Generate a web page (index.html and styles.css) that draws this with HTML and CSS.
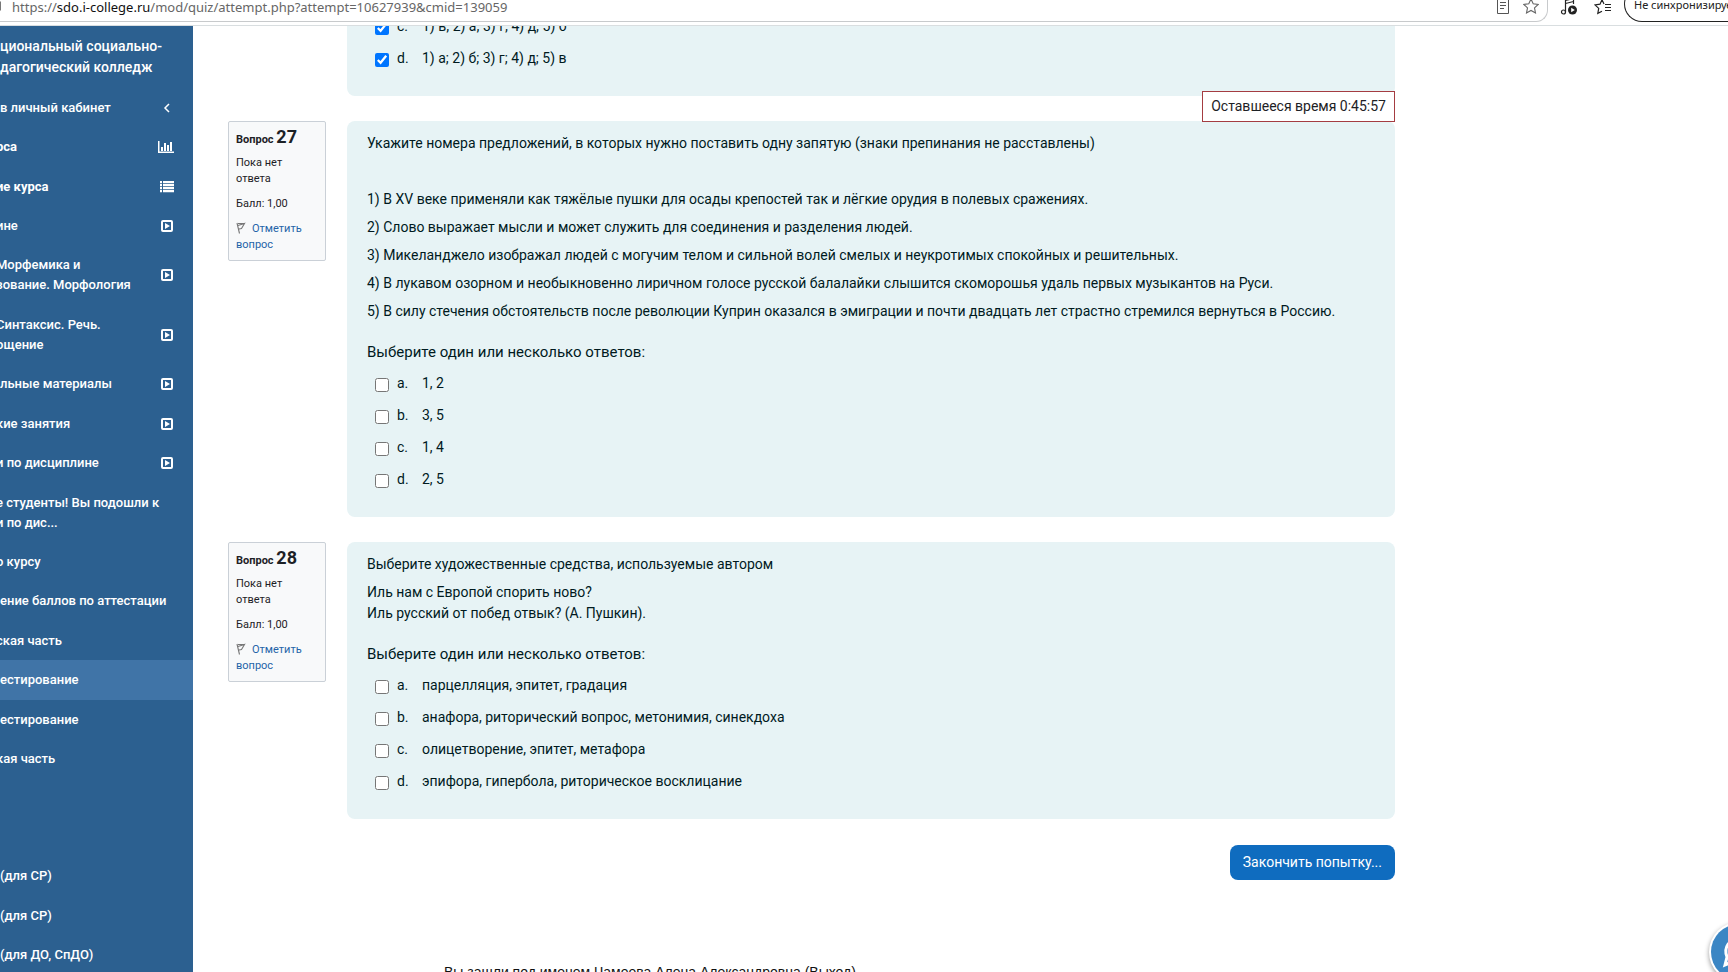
FILE: index.html
```html
<!DOCTYPE html>
<html lang="ru">
<head>
<meta charset="utf-8">
<title>Тестирование</title>
<link rel="stylesheet" href="styles.css">
</head>
<body>
<svg class="defs" aria-hidden="true">
  <symbol id="play" viewBox="0 0 13 12"><path fill-rule="evenodd" d="M2 0h8a2 2 0 0 1 2 2v8a2 2 0 0 1-2 2H2a2 2 0 0 1-2-2V2a2 2 0 0 1 2-2zM2 2v8h8V2zM4 3l5 3-5 3z"/></symbol>
  <symbol id="flag" viewBox="0 0 10 12"><path d="M1 1l2.500 10.500M2 3.500L8.500 1.500 5.500 6.500 3 7M2 1.500h6" fill="none" stroke="#777" stroke-width="1.100"/></symbol>
</svg>

<header class="browser">
  <div class="address">
    <svg class="lock" width="8" height="14" viewBox="0 0 8 14"><path d="M0 1.500v9h1V1.500z" fill="#777"/></svg>
    <span class="url">https://<b>sdo.i-college.ru</b>/mod/quiz/attempt.php?attempt=10627939&amp;cmid=139059</span>
    <button class="tool" aria-label="Режим чтения"><svg width="16" height="18" viewBox="0 0 16 18" fill="none" stroke="#555" stroke-width="1"><path d="M2.500 0v15.500h11V0M5 4.500h6M5 7.500h6M5 10.500h4"/></svg></button>
    <button class="tool" aria-label="Избранное"><svg width="16" height="18" viewBox="0 0 16 18" fill="none" stroke="#666" stroke-width="1.100"><path d="M8 1l2.200 4.800 5 .6-3.700 3.500 1 5.100L8 12.500 3.500 15l1-5.100L.8 6.400l5-.6z"/></svg></button>
  </div>
  <div class="extras">
    <button class="tool" aria-label="Музыка"><svg width="18" height="18" viewBox="0 0 18 18" fill="none" stroke="#222" stroke-width="1.200"><path d="M5.500 14V2.500l8-2V6M5.500 5.500l8-2"/><circle cx="3.500" cy="14" r="2"/><circle cx="12.500" cy="12" r="4.500" fill="#222" stroke="none"/><path d="M11.200 9.800v4.400l3.600-2.200z" fill="#fff" stroke="none"/></svg></button>
    <button class="tool" aria-label="Список избранного"><svg width="18" height="18" viewBox="0 0 18 18" fill="none" stroke="#222" stroke-width="1.200"><path d="M10 6L8 1.800 6 6.200l-5 .7 3.700 3.500-.9 5L8 13.200M11 6.500h6M11 9.500h6M11 12.500h6"/></svg></button>
  </div>
  <button class="profile">Не синхронизируется</button>
</header>

<div class="page">
  <aside class="sidebar">
    <p class="site">циональный социально-<br>дагогический колледж</p>
    <nav>
      <ul class="menu">
        <li><a href="#"><span>в личный кабинет</span><svg class="ico" width="14" height="12" viewBox="0 0 14 12"><path d="M9 2L5 6l4 4" fill="none" stroke="#fff" stroke-width="1.500"/></svg></a></li>
        <li class="strong cut"><a href="#"><span>рса</span><svg class="ico" width="16" height="12" viewBox="0 0 16 12"><path d="M0 0h1.500v10.500H16V12H0zM3 6h2v4H3zM6 2h2v8H6zM9 4h2v6H9zM12 1h2v9h-2z"/></svg></a></li>
        <li class="strong cut"><a href="#"><span>ие курса</span><svg class="ico" width="14" height="12" viewBox="0 0 14 12"><path d="M0 0h2v2.300H0zM3 0h11v2.300H3zM0 3h2v2.300H0zM3 3h11v2.300H3zM0 6h2v2.300H0zM3 6h11v2.300H3zM0 9h2v2.300H0zM3 9h11v2.300H3z"/></svg></a></li>
        <li class="cut"><a href="#"><span>ине</span><svg class="ico" width="13" height="12"><use href="#play"/></svg></a></li>
        <li class="cut"><a href="#"><span>Морфемика и<br>зование. Морфология</span><svg class="ico" width="13" height="12"><use href="#play"/></svg></a></li>
        <li class="cut"><a href="#"><span>Синтаксис. Речь.<br>ощение</span><svg class="ico" width="13" height="12"><use href="#play"/></svg></a></li>
        <li><a href="#"><span>льные материалы</span><svg class="ico" width="13" height="12"><use href="#play"/></svg></a></li>
        <li class="cut"><a href="#"><span>кие занятия</span><svg class="ico" width="13" height="12"><use href="#play"/></svg></a></li>
        <li class="cut"><a href="#"><span>и по дисциплине</span><svg class="ico" width="13" height="12"><use href="#play"/></svg></a></li>
        <li class="cut"><a href="#"><span>е студенты! Вы подошли к<br>и по дис...</span></a></li>
        <li class="cut"><a href="#"><span>о курсу</span></a></li>
        <li><a href="#"><span>ение баллов по аттестации</span></a></li>
        <li class="cut"><a href="#"><span>ская часть</span></a></li>
        <li class="active"><a href="#"><span>естирование</span></a></li>
        <li><a href="#"><span>естирование</span></a></li>
        <li class="cut"><a href="#"><span>кая часть</span></a></li>
        <li class="blank"></li>
        <li class="blank"></li>
        <li><a href="#"><span>(для СР)</span></a></li>
        <li><a href="#"><span>(для СР)</span></a></li>
        <li><a href="#"><span>(для ДО, СпДО)</span></a></li>
      </ul>
    </nav>
  </aside>

  <main class="content">
    <div class="quiz">
      <div class="timer" role="timer">Оставшееся время 0:45:57</div>

      <section class="question previous">
        <div class="card">
          <div class="answers">
            <label><input type="checkbox" checked><span class="letter">c.</span><span>1) в; 2) а; 3) г; 4) д; 5) б</span></label>
            <label><input type="checkbox" checked><span class="letter">d.</span><span>1) а; 2) б; 3) г; 4) д; 5) в</span></label>
          </div>
        </div>
      </section>

      <section class="question">
        <div class="info">
          <h3>Вопрос <span>27</span></h3>
          <p>Пока нет ответа</p>
          <p>Балл: 1,00</p>
          <p><a href="#"><svg width="10" height="12"><use href="#flag"/></svg>Отметить вопрос</a></p>
        </div>
        <div class="card">
          <p>Укажите номера предложений, в которых нужно поставить одну запятую (знаки препинания не расставлены)</p>
          <p><br></p>
          <p>1) В XV веке применяли как тяжёлые пушки для осады крепостей так и лёгкие орудия в полевых сражениях.</p>
          <p>2) Слово выражает мысли и может служить для соединения и разделения людей.</p>
          <p>3) Микеланджело изображал людей с могучим телом и сильной волей смелых и неукротимых спокойных и решительных.</p>
          <p>4) В лукавом озорном и необыкновенно лиричном голосе русской балалайки слышится скоморошья удаль первых музыкантов на Руси.</p>
          <p>5) В силу стечения обстоятельств после революции Куприн оказался в эмиграции и почти двадцать лет страстно стремился вернуться в Россию.</p>
          <fieldset>
            <legend>Выберите один или несколько ответов:</legend>
            <div class="answers">
              <label><input type="checkbox"><span class="letter">a.</span><span>1, 2</span></label>
              <label><input type="checkbox"><span class="letter">b.</span><span>3, 5</span></label>
              <label><input type="checkbox"><span class="letter">c.</span><span>1, 4</span></label>
              <label><input type="checkbox"><span class="letter">d.</span><span>2, 5</span></label>
            </div>
          </fieldset>
        </div>
      </section>

      <section class="question">
        <div class="info">
          <h3>Вопрос <span>28</span></h3>
          <p>Пока нет ответа</p>
          <p>Балл: 1,00</p>
          <p><a href="#"><svg width="10" height="12"><use href="#flag"/></svg>Отметить вопрос</a></p>
        </div>
        <div class="card">
          <p>Выберите художественные средства, используемые автором</p>
          <p>Иль нам с Европой спорить ново?<br>Иль русский от побед отвык? (А. Пушкин).</p>
          <fieldset>
            <legend>Выберите один или несколько ответов:</legend>
            <div class="answers">
              <label><input type="checkbox"><span class="letter">a.</span><span>парцелляция, эпитет, градация</span></label>
              <label><input type="checkbox"><span class="letter">b.</span><span>анафора, риторический вопрос, метонимия, синекдоха</span></label>
              <label><input type="checkbox"><span class="letter">c.</span><span>олицетворение, эпитет, метафора</span></label>
              <label><input type="checkbox"><span class="letter">d.</span><span>эпифора, гипербола, риторическое восклицание</span></label>
            </div>
          </fieldset>
        </div>
      </section>

      <div class="submit"><button class="finish">Закончить попытку...</button></div>
    </div>
    <footer class="footer">Вы зашли под именем Чамеева Алена Александровна (Выход)</footer>
  </main>
</div>

<button class="chat" aria-label="Чат"><svg width="34" height="34" viewBox="0 0 34 34" fill="none" stroke="#fff" stroke-width="3"><path d="M3 30l2-8C1 12 8 4 17 4s15 6 15 12-6 12-15 12c-3 0-5 0-7-1z"/></svg></button>
</body>
</html>
```
FILE: styles.css
```css
* { box-sizing: border-box; }

body {
  margin: 0;
  height: 100vh;
  display: flex;
  flex-direction: column;
  overflow: hidden;
  background: #fff;
  color: #1d2125;
  font: 14px/21px Roboto, sans-serif;
}

p, ul, h3, fieldset, legend { margin: 0; padding: 0; }
button { font: inherit; cursor: pointer; }
.defs { position: absolute; width: 0; height: 0; }

/* Browser toolbar */
.browser {
  flex: none;
  display: flex;
  align-items: flex-start;
  gap: 12px;
  height: 26px;
  border-bottom: 1px solid #d9dee0;
  font-family: "Noto Sans", sans-serif;
  overflow: hidden;
}
.address {
  flex: 1;
  display: flex;
  align-items: flex-start;
  gap: 12px;
  height: 22px;
  padding-right: 8px;
  border: solid #c8cacc;
  border-width: 0 1px 1px 0;
  border-bottom-right-radius: 12px;
}
.extras { display: flex; gap: 16px; }
.lock { margin-right: -8px; flex: none; }
.url { flex: 1; font-size: 13px; line-height: 14px; color: #666; white-space: nowrap; }
.url b { font-weight: 400; color: #111; }
.tool { margin-top: -2px; padding: 0; border: 0; background: none; line-height: 0; }
.profile {
  width: 104px;
  height: 36px;
  margin-top: -14px;
  padding: 0 0 0 9px;
  border: 1px solid #222;
  border-right: 0;
  border-radius: 18px 0 0 18px;
  background: none;
  color: #222;
  font-size: 11px;
  line-height: 36px;
  text-align: left;
  white-space: nowrap;
  overflow: hidden;
}

.page { flex: 1; min-height: 0; display: flex; }

/* Course navigation */
.sidebar {
  flex: none;
  width: 193px;
  display: flex;
  flex-direction: column;
  background: #2c6090;
  color: #fff;
  font-weight: 500;
  overflow: hidden;
}
.site { padding: 10px 0; font-size: 14px; white-space: nowrap; }
.sidebar nav { flex: 1; display: flex; margin-bottom: -3px; }
.menu { flex: 1; display: flex; flex-direction: column; list-style: none; }
.menu li { flex: 1 0 auto; min-height: 39px; display: flex; }
.menu a {
  flex: 1;
  display: flex;
  align-items: center;
  justify-content: space-between;
  padding-right: 19px;
  color: inherit;
  font-size: 13px;
  line-height: 20px;
  text-decoration: none;
  white-space: nowrap;
}
.menu li:has(br) { min-height: 59px; }
.menu .cut span { margin-left: -4px; }
.menu .strong { font-weight: 700; }
.menu .active { background: #4074a7; }
.ico { flex: none; fill: #fff; }

/* Quiz */
.content { flex: 1; min-width: 0; overflow: hidden; }
.quiz { display: flow-root; position: relative; max-width: 1202px; padding-left: 35px; }
.timer {
  position: absolute;
  top: 65px;
  right: 0;
  padding: 4px 8px;
  border: 1px solid #a43c41;
  background: #fff;
}
.question { display: grid; grid-template-columns: 98px 1fr; gap: 21px; align-items: start; margin-bottom: 25px; }
.previous { margin-top: -28px; }
.card {
  grid-column: 2;
  padding: 12px 20px 22px;
  border-radius: 8px;
  background: #e7f3f5;
  color: #001a1e;
}
.card p { margin-bottom: 7px; }
fieldset { min-width: 0; border: 0; padding-top: 11px; }
legend { float: left; width: 100%; font-size: 15px; line-height: 24px; margin-bottom: 3px; }
.answers { clear: both; }
.answers label { display: flex; align-items: center; height: 32px; padding-left: 8px; }
.answers input { width: 14px; height: 14px; margin: 3px 8px 0 0; }
.letter { width: 25px; }

.info {
  padding: 6px 7px 7px;
  border: 1px solid #cad0d7;
  border-radius: 2px;
  background: #f8f9fa;
  font-size: 11px;
  line-height: 16px;
}
.info h3 { font-size: 11px; line-height: 18px; font-weight: 700; margin-bottom: 6px; }
.info h3 span { font-size: 18px; }
.info p { margin-bottom: 9px; padding-right: 8px; }
.info p:last-child { margin-bottom: 0; }
.info a { color: #2463a8; text-decoration: none; }
.info svg { margin-right: 6px; vertical-align: -2px; }

.submit { display: flex; justify-content: flex-end; padding-top: 1px; }
.finish {
  padding: 7px 13px;
  border: 0;
  border-radius: 8px;
  background: #0f6cbf;
  color: #fff;
  font-size: 14px;
}
.footer { margin-top: 82px; padding-left: 251px; font: 14px/21px "Liberation Sans", Arial, sans-serif; color: #111; }

.chat {
  position: fixed;
  right: -39px;
  bottom: -8px;
  width: 56px;
  height: 56px;
  padding: 11px;
  border: 0;
  border-radius: 50%;
  background: #3b86c4;
  box-shadow: 0 0 0 2px #fff, 0 2px 5px 2px #0006;
  line-height: 0;
}
```
